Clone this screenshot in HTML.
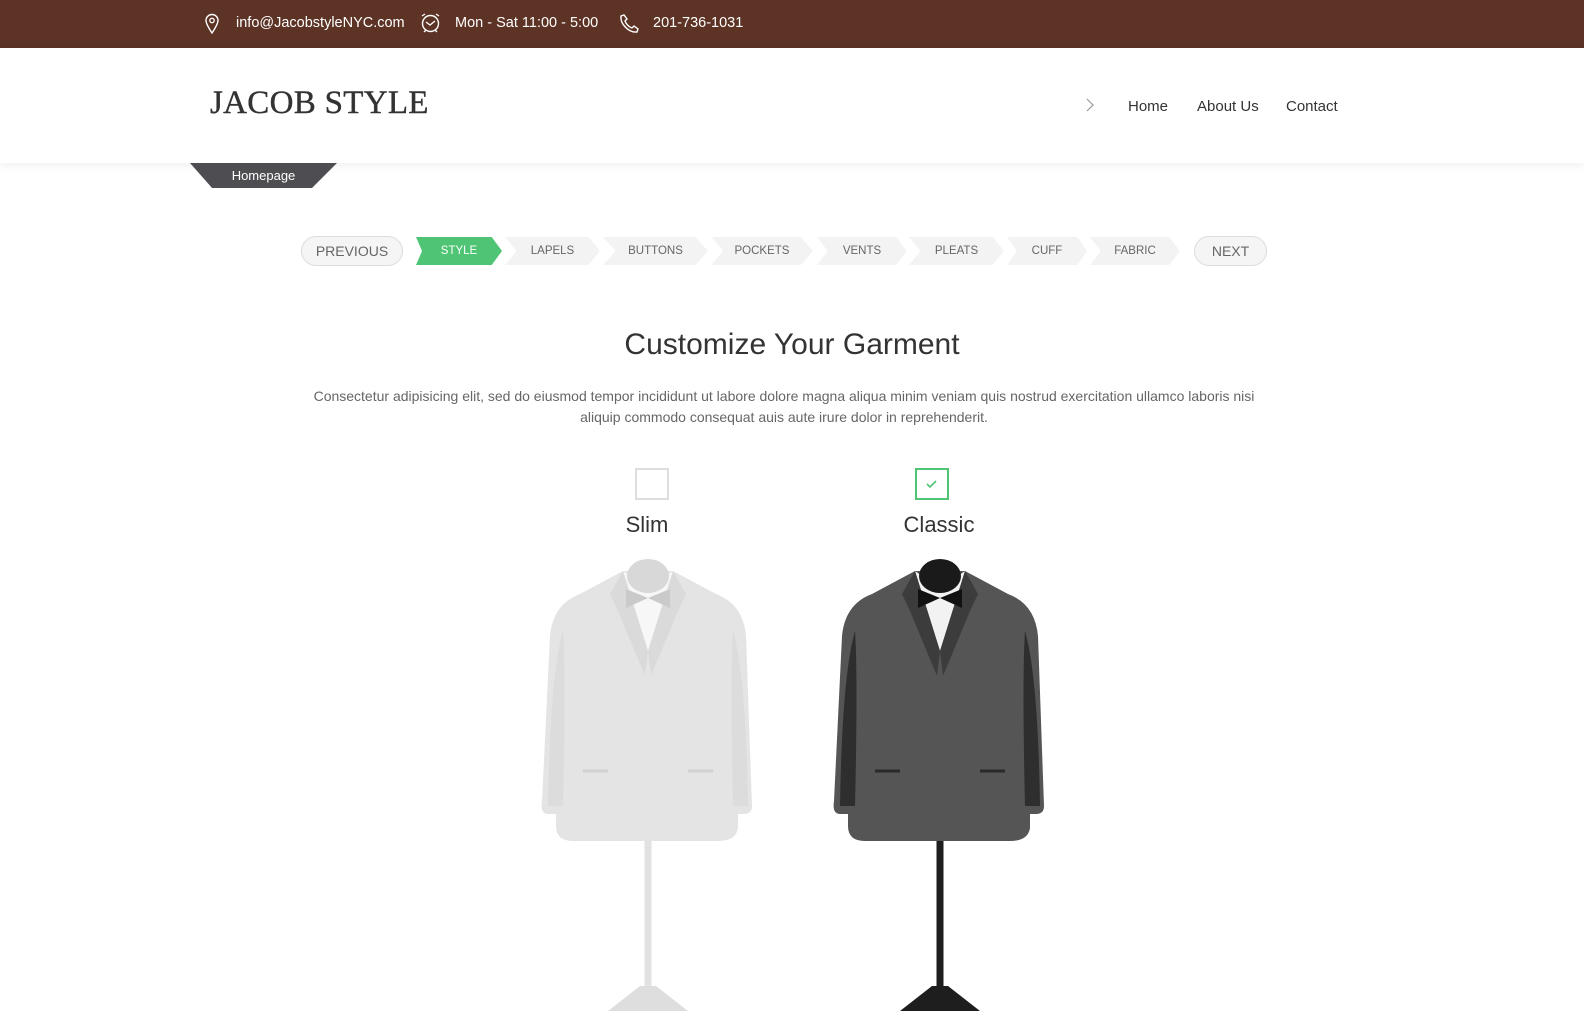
<!DOCTYPE html>
<html><head><meta charset="utf-8"><style>
body{margin:0;width:1584px;height:1017px;overflow:hidden;background:#fff;font-family:"Liberation Sans",sans-serif;position:relative}
.top{position:absolute;left:0;top:0;width:1584px;height:48px;background:#5c3324;color:#fff;font-size:14.5px}
.top span{position:absolute;top:15px}
.top svg{position:absolute}
.hdr{position:absolute;top:48px;left:0;width:1584px;height:115px;background:#fff;box-shadow:0 2px 10px rgba(0,0,0,.07)}
.logo{position:absolute;left:210px;top:85px;font-family:"Liberation Serif",serif;font-size:33px;color:#333;letter-spacing:.3px;-webkit-text-stroke:.4px #333}
.nav{position:absolute;top:98px;font-size:15px;color:#333}
.tab{position:absolute;left:190px;top:163px;width:147px;height:25px;background:#4e4e52;clip-path:polygon(0 0,100% 0,83% 100%,15% 100%);color:#fff;font-size:13px;text-align:center;line-height:25px}
.pill{position:absolute;top:236px;height:28px;border:1px solid #ddd;border-radius:15px;background:#f5f5f5;color:#666;font-size:14px;text-align:center;line-height:28px}
.st{position:absolute;top:237px;height:28px;background:#f3f3f3;color:#666;font-size:11.5px;line-height:28px;text-align:center;clip-path:polygon(0 0,88% 0,100% 50%,88% 100%,0 100%,12% 50%)}
h1{position:absolute;top:328px;left:0;width:1584px;text-align:center;margin:0;font-weight:normal;font-size:30px;color:#333}
.p{position:absolute;top:386px;left:296px;width:976px;text-align:center;color:#666;font-size:14px;line-height:21px}
.cb{position:absolute;top:468px;width:34px;height:32px;border:2px solid #ddd;box-sizing:border-box}
.lbl{position:absolute;top:512px;font-size:22px;color:#333;text-align:center;width:120px}
</style></head><body>
<div class="top">
<svg style="left:204px;top:13px" width="16" height="21" viewBox="0 0 16 21"><path d="M8 20C4 14 2 10 2 7.5a6 6 0 0 1 12 0C14 10 12 14 8 20Z" fill="none" stroke="#fff" stroke-width="1.4"/><circle cx="8" cy="7.5" r="2.2" fill="none" stroke="#fff" stroke-width="1.3"/></svg>
<span style="left:236px">info@JacobstyleNYC.com</span>
<svg style="left:419px;top:12px" width="23" height="22" viewBox="0 0 23 22"><circle cx="11.5" cy="11.5" r="8" fill="none" stroke="#fff" stroke-width="1.4"/><path d="M7 10l4 3 5-4M3 4l3-2M20 4l-3-2M5 20l2-2M18 20l-2-2" fill="none" stroke="#fff" stroke-width="1.3"/></svg>
<span style="left:455px">Mon - Sat 11:00 - 5:00</span>
<svg style="left:618px;top:13px" width="22" height="21" viewBox="0 0 22 21"><path d="M3 3l3-1 3 4-2 2c1 3 4 6 7 7l2-2 4 3-1 3c-8 1-17-8-16-16Z" fill="none" stroke="#fff" stroke-width="1.4"/></svg>
<span style="left:653px">201-736-1031</span>
</div>
<div class="hdr"></div>
<div class="logo">JACOB STYLE</div>
<svg style="position:absolute;left:1085px;top:98px" width="10" height="14"><path d="M2 1l6 6-6 6" fill="none" stroke="#999" stroke-width="1.2"/></svg>
<div class="nav" style="left:1128px">Home</div>
<div class="nav" style="left:1197px">About Us</div>
<div class="nav" style="left:1286px">Contact</div>
<div class="tab">Homepage</div>
<div class="pill" style="left:301px;width:100px">PREVIOUS</div>
<div class="st" style="left:416px;width:86px;background:#4ec474;color:#fff;clip-path:polygon(0 0,88% 0,100% 50%,88% 100%,0 100%,7% 50%)">STYLE</div>
<div class="st" style="left:505px;width:95px">LAPELS</div>
<div class="st" style="left:603px;width:105px">BUTTONS</div>
<div class="st" style="left:711px;width:102px">POCKETS</div>
<div class="st" style="left:817px;width:90px">VENTS</div>
<div class="st" style="left:909px;width:95px">PLEATS</div>
<div class="st" style="left:1007px;width:80px">CUFF</div>
<div class="st" style="left:1090px;width:90px">FABRIC</div>
<div class="pill" style="left:1194px;width:71px">NEXT</div>
<h1>Customize Your Garment</h1>
<div class="p">Consectetur adipisicing elit, sed do eiusmod tempor incididunt ut labore dolore magna aliqua minim veniam quis nostrud exercitation ullamco laboris nisi aliquip commodo consequat auis aute irure dolor in reprehenderit.</div>
<div class="cb" style="left:635px"></div>
<div class="cb" style="left:915px;border-color:#4ec474"><svg width="30" height="28"><path d="M10 14l3 3 6-6" fill="none" stroke="#4ec474" stroke-width="1.6"/></svg></div>
<div class="lbl" style="left:587px">Slim</div>
<div class="lbl" style="left:879px">Classic</div>
<svg style="position:absolute;left:0;top:0" width="1584" height="1017">
<g transform="translate(648,556)">
<rect x="-3.5" y="280" width="7" height="160" fill="#e2e2e2"/>
<path d="M-8 430L-40 455L40 455L8 430Z" fill="#dedede"/>
<path d="M-68 38L-25 15L25 15L68 38Q95 48 98 80L104 250Q104 258 96 258L90 258L90 272Q88 285 70 285L-75 285Q-92 285 -92 270L-92 258L-100 258Q-108 258 -106 245L-98 80Q-95 48 -68 38Z" fill="#e4e4e4"/>
<path d="M-25 15L0 95L25 15L15 22L-15 22Z" fill="#f7f7f7"/>
<ellipse cx="0" cy="20" rx="21" ry="17" fill="#d8d8d8"/>
<path d="M-25 15L-38 38L-30 55L-3 120L0 95ZM25 15L38 38L30 55L3 120L0 95Z" fill="#dadada"/>
<path d="M-22 33L-22 52L0 42ZM22 33L22 52L0 42Z" fill="#cacaca"/>
<path d="M-85 75Q-98 120 -100 250L-85 250Q-82 120 -85 75ZM85 75Q98 120 100 250L85 250Q82 120 85 75Z" fill="#dcdcdc"/>
<path d="M-65 215h25M40 215h25" stroke="#d2d2d2" stroke-width="3"/>
</g>
<g transform="translate(940,556)">
<rect x="-3.5" y="280" width="7" height="160" fill="#1e1e1e"/>
<path d="M-8 430L-40 455L40 455L8 430Z" fill="#1e1e1e"/>
<path d="M-68 38L-25 15L25 15L68 38Q95 48 98 80L104 250Q104 258 96 258L90 258L90 272Q88 285 70 285L-75 285Q-92 285 -92 270L-92 258L-100 258Q-108 258 -106 245L-98 80Q-95 48 -68 38Z" fill="#555"/>
<path d="M-25 15L0 95L25 15L15 22L-15 22Z" fill="#f2f2f2"/>
<ellipse cx="0" cy="20" rx="21" ry="17" fill="#1a1a1a"/>
<path d="M-25 15L-38 38L-30 55L-3 120L0 95ZM25 15L38 38L30 55L3 120L0 95Z" fill="#3c3c3c"/>
<path d="M-22 33L-22 52L0 42ZM22 33L22 52L0 42Z" fill="#111"/>
<path d="M-85 75Q-98 120 -100 250L-85 250Q-82 120 -85 75ZM85 75Q98 120 100 250L85 250Q82 120 85 75Z" fill="#2e2e2e"/>
<path d="M-65 215h25M40 215h25" stroke="#2a2a2a" stroke-width="3"/>
</g>
</svg>
</body></html>
